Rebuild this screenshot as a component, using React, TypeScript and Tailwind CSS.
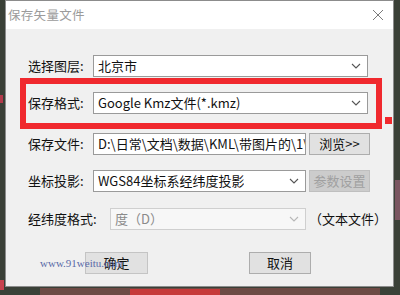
import React from "react";

const font = { fontFamily: '"Noto Sans CJK SC", "Noto Sans", sans-serif' };

function Chevron({ color = "#5a5a5a" }: { color?: string }) {
  return (
    <svg width="10" height="6" viewBox="0 0 10 6" className="shrink-0">
      <path d="M1 1 L5 5 L9 1" fill="none" stroke={color} strokeWidth="1.1" />
    </svg>
  );
}

function Select({ text, w, disabled }: { text: string; w: string; disabled?: boolean }) {
  return (
    <div
      className={`${w} h-[22px] flex items-center justify-between pl-[4px] pr-[6px] border ${
        disabled ? "border-[#cfcfcf] bg-[#f7f7f7] text-[#8a8a8a]" : "border-[#9a9a9a] bg-white text-[#111]"
      }`}
    >
      <span className="whitespace-nowrap overflow-hidden">{text}</span>
      <Chevron color={disabled ? "#b8b8b8" : "#555"} />
    </div>
  );
}

export default function App() {
  return (
    <div className="w-[400px] h-[295px] bg-[#3a4037] relative overflow-hidden" style={font}>
      <div className="absolute left-0 top-[95px] w-[3px] h-[8px] bg-[#b33a4a]" />
      <div className="absolute left-0 top-[280px] w-[4px] h-[10px] bg-[#c7424e]" />
      <div className="absolute left-[40px] bottom-0 w-[340px] h-[7px] bg-[#6d4a44]" />
      <div className="absolute left-[130px] bottom-0 w-[90px] h-[6px] bg-[#c63a3a]" />
      <div className="absolute right-0 top-[180px] w-[5px] h-[40px] bg-[#7a5560]" />

      <div className="ml-[5px] w-[389px] h-[287px] flex flex-col border border-[#8c8c8c] bg-[#f0f0f0]">
        <div className="h-[28px] bg-white flex items-center justify-between pl-[2px] pr-[9px]">
          <span className="text-[12.5px] text-[#9b9b9b] tracking-[0.3px]">保存矢量文件</span>
          <svg width="12" height="12" viewBox="0 0 12 12">
            <path d="M1 1 L11 11 M11 1 L1 11" stroke="#7a7a7a" strokeWidth="1" />
          </svg>
        </div>

        <div className="flex-1 flex flex-col pl-[22px] text-[13px] text-[#111]">
          <div className="mt-[26px] h-[22px] flex items-center">
            <span className="w-[65px]">选择图层:</span>
            <Select text="北京市" w="w-[275px]" />
          </div>
          <div className="mt-[15px] h-[22px] flex items-center">
            <span className="w-[65px]">保存格式:</span>
            <Select text="Google Kmz文件(*.kmz)" w="w-[275px]" />
          </div>
          <div className="mt-[19px] h-[22px] flex items-center">
            <span className="w-[65px]">保存文件:</span>
            <div className="w-[213px] h-[22px] flex items-center pl-[4px] border border-[#9a9a9a] bg-white overflow-hidden whitespace-nowrap">
              D:\日常\文档\数据\KML\带图片的\1\北京市
            </div>
            <button className="ml-[3px] w-[61px] h-[22px] bg-[#e1e1e1] border border-[#adadad] text-[13px]">
              浏览&gt;&gt;
            </button>
          </div>
          <div className="mt-[15px] h-[22px] flex items-center">
            <span className="w-[65px]">坐标投影:</span>
            <Select text="WGS84坐标系经纬度投影" w="w-[213px]" />
            <button className="ml-[3px] w-[61px] h-[22px] bg-[#cccccc] border border-[#bfbfbf] text-[#a0a0a0] text-[13px]">
              参数设置
            </button>
          </div>
          <div className="mt-[16px] h-[22px] flex items-center">
            <span className="w-[82px]">经纬度格式:</span>
            <Select text="度（D）" w="w-[196px]" disabled />
            <span className="ml-[3px]">（文本文件）</span>
          </div>
          <div className="mt-[22px] h-[22px] flex items-center">
            <button className="ml-[57px] w-[63px] h-[22px] bg-[#e1e1e1] border border-[#c4c4c4] text-[13px]">
              确定
            </button>
            <button className="ml-[101px] w-[62px] h-[22px] bg-[#e1e1e1] border border-[#adadad] text-[13px]">
              取消
            </button>
          </div>
        </div>
      </div>

      <div className="absolute left-[20px] top-[78px] w-[362px] h-[51px] border-[6px] border-[#f0292e]" />
      <div className="absolute left-[385px] top-[117px] w-[7px] h-[7px] bg-[#f0292e]" />
      <div
        className="absolute left-[40px] top-[255px] text-[11px] text-[#5b6aa8] pointer-events-none"
        style={{ fontFamily: '"Liberation Serif", serif' }}
      >
        www.91weitu.com
      </div>
    </div>
  );
}
